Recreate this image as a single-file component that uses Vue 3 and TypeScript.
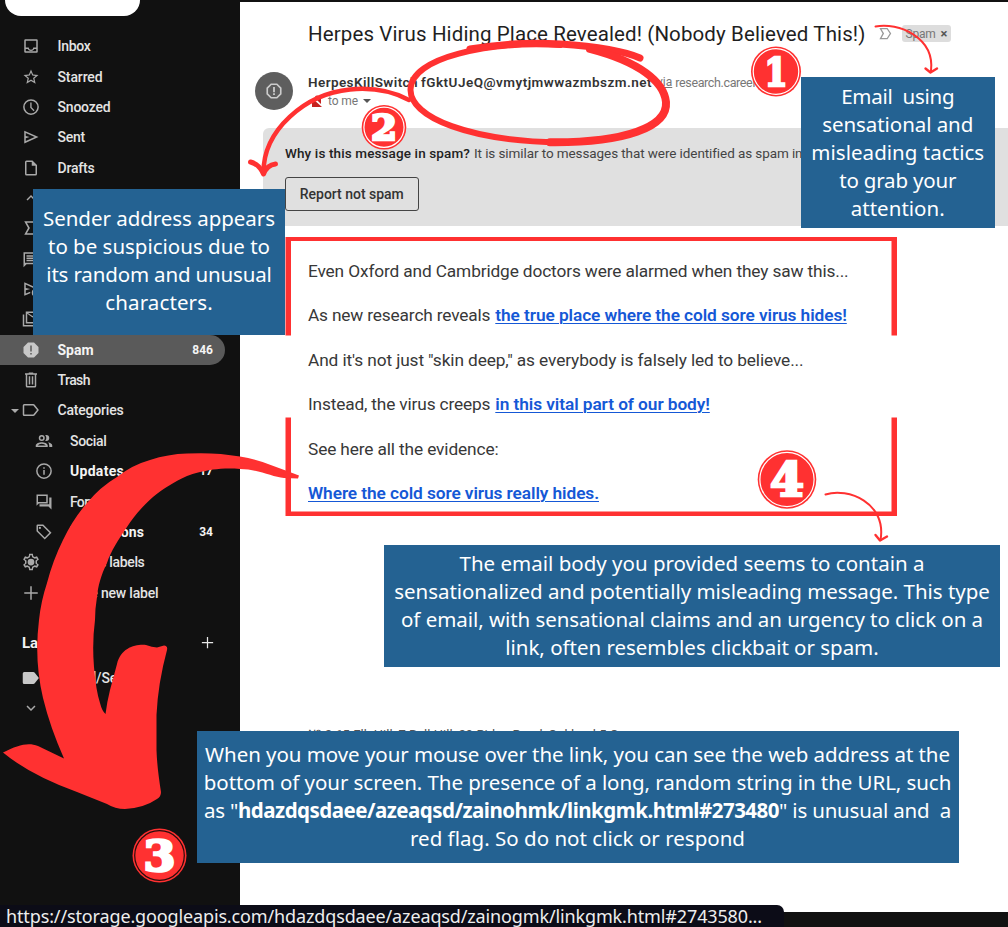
<script setup lang="ts">
interface NavItem {
  label: string
  icon: string
  width: number
  count?: string
  bold?: boolean
  sub?: boolean
  active?: boolean
  caret?: boolean
}

interface Line {
  text: string
  width: number
  link?: string
  linkWidth?: number
}

const icons: Record<string, string> = {
  inbox: 'M4.5 3h15A1.5 1.5 0 0 1 21 4.500v15a1.500 1.500 0 0 1-1.500 1.500h-15A1.500 1.500 0 0 1 3 19.500v-15A1.500 1.500 0 0 1 4.500 3zM5 5v9h4a3 3 0 0 0 6 0h4V5zM5 16v3h14v-3h-2.600a5 5 0 0 1-8.800 0z',
  star: 'M22 9.240l-7.190-.620L12 2 9.190 8.630 2 9.240l5.460 4.730L5.820 21 12 17.270 18.180 21l-1.630-7.030zM12 15.400l-3.760 2.270 1-4.280-3.320-2.880 4.380-.380L12 6.100l1.710 4.040 4.380.380-3.320 2.880 1 4.280z',
  clock: 'M12 1.500a10.500 10.500 0 1 0 0 21 10.500 10.500 0 0 0 0-21zm0 19a8.500 8.500 0 1 1 0-17 8.500 8.500 0 0 1 0 17zM12.800 6H11v7l4.500 4.500 1.200-1.300-3.900-3.900z',
  send: 'M3 3.500v17l19-8.500zm2 3.100L17 12 5 17.400V13.500l5-1.500-5-1.500z',
  draft: 'M14 2H6a2 2 0 0 0-2 2v16a2 2 0 0 0 2 2h12a2 2 0 0 0 2-2V8zM6 20V4h7v5h5v11z',
  up: 'M12 8l-6 6 1.400 1.400L12 10.800l4.600 4.600L18 14z',
  down: 'M16.600 8.600L12 13.200 7.400 8.600 6 10l6 6 6-6z',
  important: 'M3 3h13l6 9-6 9H3l5-9zM6.500 5l4 7-4 7h8.500l4.600-7L15 5z',
  chat: 'M22 3H2v20l4-4h16zM4 5h16v12H4zM6 7h12v2H6zm0 3h12v2H6zm0 3h12v2H6z',
  scheduled: 'M3 3v18l8-3.500v-2L5 18v-4.500l6-1.500-6-1.500V6l10 4.500h5zM18 12a5 5 0 1 0 0 10 5 5 0 0 0 0-10z',
  allmail: 'M5 2h18v16H5zm2 3v11h14V5l-7 5zm1-1 6 4 6-4zM1 6h2v14h17v2H1z',
  spam: 'M8 2h8l6 6v8l-6 6H8l-6-6V8zm3 4v8h2V6zm0 10v2h2v-2z',
  trash: 'M15 3V2H9v1H4v2h1v15a2 2 0 0 0 2 2h10a2 2 0 0 0 2-2V5h1V3zm2 17H7V5h10zM9 7h2v11H9zm4 0h2v11h-2z',
  label: 'M3 4h12a2.500 2.500 0 0 1 2 1l5.500 7-5.500 7a2.500 2.500 0 0 1-2 1H3a2 2 0 0 1-2-2V6a2 2 0 0 1 2-2zm0 2v12h12l5-6-5-6z',
  labelSolid: 'M3 4h12a2.500 2.500 0 0 1 2 1l5.500 7-5.500 7a2.500 2.500 0 0 1-2 1H3a2 2 0 0 1-2-2V6a2 2 0 0 1 2-2z',
  people: 'M9 4a4 4 0 1 0 0 8 4 4 0 0 0 0-8zm0 2a2 2 0 1 1 0 4 2 2 0 0 1 0-4zM9 13.500c-3 0-8 1.500-8 4.500v2h16v-2c0-3-5-4.500-8-4.500zM3.500 18c.7-1.300 3.500-2.500 5.500-2.500s4.800 1.200 5.500 2.500zM15 4a4 4 0 0 1 0 8c-.6 0-1-.1-1.400-.3 2-2.500 2-5 0-7.400.4-.2.9-.3 1.400-.3zM17.500 13.700c2.700.6 5.500 2 5.500 4.300v2h-4v-2c0-1.700-.5-3.200-1.500-4.300z',
  info: 'M12 1.500a10.500 10.500 0 1 0 0 21 10.500 10.500 0 0 0 0-21zm0 19a8.500 8.500 0 1 1 0-17 8.500 8.500 0 0 1 0 17zM11 10.500h2V17h-2zM11 7h2v2h-2z',
  forum: 'M2 2h15v12H5l-3 3zm2 2v8h11V4zM19 6h3v16l-4-4H6v-3h13z',
  tag: 'M11 2H3.500A1.500 1.500 0 0 0 2 3.500V11l11 11 9-9zM4 4h6.200l9 9L13 19.200l-9-9zM6.500 5a1.500 1.500 0 1 0 0 3 1.500 1.500 0 0 0 0-3z',
  gear: 'M9.500 1h5l.5 3.200 2 1.200 3-1.200 2.500 4.300L20 10.500v3l2.500 2-2.500 4.300-3-1.200-2 1.200-.5 3.200h-5L9 19.800l-2-1.200-3 1.200-2.500-4.300 2.500-2v-3l-2.500-2L4 4.200l3 1.200 2-1.200zM11 3l-.5 2.700L7 7.700 4.900 6.900l-.9 1.600 2 1.600v3.800l-2 1.600.9 1.600 2.100-.8 3.500 2L11 21h2l.5-2.700 3.500-2 2.100.8.9-1.600-2-1.600v-3.800l2-1.600-.9-1.600-2.100.8-3.500-2L13 3zM12 7.500a4.500 4.500 0 1 1 0 9 4.500 4.500 0 0 1 0-9z',
  plus: 'M11 3h2v8h8v2h-8v8h-2v-8H3v-2h8z',
}

const nav: NavItem[] = [
  { label: 'Inbox', icon: 'inbox', width: 33 },
  { label: 'Starred', icon: 'star', width: 45 },
  { label: 'Snoozed', icon: 'clock', width: 53 },
  { label: 'Sent', icon: 'send', width: 27.5 },
  { label: 'Drafts', icon: 'draft', width: 37 },
  { label: '', icon: 'up', width: 0 },
  { label: '', icon: 'important', width: 0 },
  { label: '', icon: 'chat', width: 0 },
  { label: '', icon: 'scheduled', width: 0 },
  { label: '', icon: 'allmail', width: 0 },
  { label: 'Spam', icon: 'spam', width: 36, count: '846', bold: true, active: true },
  { label: 'Trash', icon: 'trash', width: 32.5 },
  { label: 'Categories', icon: 'label', width: 66, caret: true },
  { label: 'Social', icon: 'people', width: 36.5, sub: true },
  { label: 'Updates', icon: 'info', width: 54, sub: true, bold: true, count: '17' },
  { label: 'Forums', icon: 'forum', width: 43.5, sub: true },
  { label: 'Promotions', icon: 'tag', width: 74, sub: true, bold: true, count: '34' },
  { label: 'Manage labels', icon: 'gear', width: 87 },
  { label: 'Create new label', icon: 'plus', width: 101 },
]

const body: Line[] = [
  { text: 'Even Oxford and Cambridge doctors were alarmed when they saw this...', width: 540.5 },
  { text: 'As new research reveals', width: 182.3, link: 'the true place where the cold sore virus hides!', linkWidth: 351.5 },
  { text: 'And it\'s not just "skin deep," as everybody is falsely led to believe...', width: 495.5 },
  { text: 'Instead, the virus creeps', width: 182.3, link: 'in this vital part of our body!', linkWidth: 214.5 },
  { text: 'See here all the evidence:', width: 190.5 },
  { text: '', width: 0, link: 'Where the cold sore virus really hides.', linkWidth: 291 },
]

const callouts: { name: string; lines: Line[] }[] = [
  {
    name: 'c1',
    lines: [
      { text: 'Email\u00a0 using', width: 113 },
      { text: 'sensational and', width: 151 },
      { text: 'misleading tactics', width: 173 },
      { text: 'to grab your', width: 117 },
      { text: 'attention.', width: 94 },
    ],
  },
  {
    name: 'c2',
    lines: [
      { text: 'Sender address appears', width: 232 },
      { text: 'to be suspicious due to', width: 222 },
      { text: 'its random and unusual', width: 225.5 },
      { text: 'characters.', width: 107.5 },
    ],
  },
  {
    name: 'c4',
    lines: [
      { text: 'The email body you provided seems to contain a', width: 465 },
      { text: 'sensationalized and potentially misleading message. This type', width: 595.5 },
      { text: 'of email, with sensational claims and an urgency to click on a', width: 582 },
      { text: 'link, often resembles clickbait or spam.', width: 373.5 },
    ],
  },
]

const badges = [
  { n: '1', x: 776, y: 71.5, r: 25, size: 39, w: 23, ring: '#ffffff' },
  { n: '2', x: 384, y: 127.3, r: 22.3, size: 35, w: 26, ring: '#ffffff' },
  { n: '3', x: 159.5, y: 855.5, r: 27, size: 42, w: 32, ring: '#2a0c0c' },
  { n: '4', x: 787, y: 479.5, r: 29.3, size: 46, w: 34, ring: '#ffffff' },
]

const vFit = {
  mounted(el: HTMLElement, binding: { value: number }) {
    const n = (el.textContent ?? '').length
    if (!n || !binding.value) return
    const natural = el.getBoundingClientRect().width
    el.style.letterSpacing = `${(binding.value - natural) / n}px`
  },
}
</script>

<template>
  <div class="stage">
    <div class="mail">
      <aside class="sidebar">
        <div class="compose"></div>
        <nav class="nav">
          <div
            v-for="item in nav"
            :key="item.icon"
            class="row"
            :class="{ sub: item.sub, active: item.active, bold: item.bold }"
          >
            <span v-if="item.caret" class="caret"></span>
            <svg class="ico" viewBox="0 0 24 24"><path fill-rule="evenodd" :d="icons[item.icon]" /></svg>
            <span class="name"><span v-if="item.label" v-fit="item.width">{{ item.label }}</span></span>
            <span v-if="item.count" class="count">{{ item.count }}</span>
          </div>
        </nav>
        <div class="labels-head">
          <span>Labels</span>
          <svg class="add" viewBox="0 0 24 24"><path :d="icons.plus" /></svg>
        </div>
        <div class="row">
          <svg class="ico bright" viewBox="0 0 24 24"><path :d="icons.labelSolid" /></svg>
          <span class="name"><span v-fit="72">[Imap]/Sent</span></span>
        </div>
        <div class="row">
          <svg class="ico" viewBox="0 0 24 24"><path :d="icons.down" /></svg>
        </div>
      </aside>

      <main class="message">
        <header class="subject">
          <h1><span v-fit="557.5">Herpes Virus Hiding Place Revealed! (Nobody Believed This!)</span></h1>
          <svg class="marker" viewBox="0 0 24 24"><path fill-rule="evenodd" :d="icons.important" /></svg>
          <span class="chip"><span v-fit="30">Spam</span><b>×</b></span>
        </header>
        <section class="sender">
          <div class="avatar">
            <svg viewBox="0 0 24 24"><path fill="none" stroke="#ccc" stroke-width="2.200" d="M8.200 3h7.600L21 8.200v7.600L15.800 21H8.200L3 15.800V8.200z" /><path fill="#ccc" d="M10.800 6.500h2.400v7h-2.400zm0 8.500h2.400v2.400h-2.400z" /></svg>
          </div>
          <div class="who">
            <div class="from">
              <b v-fit="110">HerpesKillSwitch</b><b class="addr" v-fit="231">fGktUJeQ@vmytjmwwazmbszm.net</b>
              <u>via</u><span class="via" v-fit="81">research.career</span>
            </div>
            <div class="to">
              <svg class="lock" viewBox="0 0 12 12"><path fill="#c5221f" d="M1 4h1l9 8H1zM4 4V2.500a2 2 0 0 1 4 0V4h2v5L5 4z" /></svg>
              <span v-fit="30">to me</span><i></i>
            </div>
          </div>
        </section>
        <section class="notice">
          <p><b v-fit="185">Why is this message in spam?</b><span v-fit="328">It is similar to messages that were identified as spam in</span></p>
          <button><span v-fit="104">Report not spam</span></button>
        </section>
        <article class="body">
          <p v-for="(l, i) in body" :key="i">
            <span v-if="l.text" class="txt" v-fit="l.width">{{ l.text }}</span>
            <a v-if="l.link" v-fit="l.linkWidth!">{{ l.link }}</a>
          </p>
        </article>
        <footer class="footer"><span v-fit="344">№ 2 65 Elk Hill, 7 Bell Hill, 29 Ridge Road, Oakland 5 Oregon</span></footer>
      </main>
    </div>
    <div class="status"><span v-fit="756">https://storage.googleapis.com/hdazdqsdaee/azeaqsd/zainogmk/linkgmk.html#2743580...</span></div>

    <svg class="ink" viewBox="0 0 1008 927">
      <path class="frame" d="M285.500 335.500V237H897v98.500h-5.500V241H291v94.500zM285.500 417.500H291V511.500H891.500v-94H897V516H285.500z" />
    </svg>

    <div v-for="c in callouts" :key="c.name" class="callout" :class="c.name">
      <div v-for="(l, i) in c.lines" :key="i"><span v-fit="l.width">{{ l.text }}</span></div>
    </div>

    <svg class="ink" viewBox="0 0 1008 927">
      <g class="brush">
        <path stroke-width="7" d="M640 58C622 50 590 46 560 44S500 44 470 49" />
        <path stroke-width="6" d="M560 45C490 41 410 57 410.500 90C411 118 470 141 560 142.500" />
        <path stroke-width="8" d="M550 142.300C625 143 668 127 666 102C664 82 640 62 590 49" />
      </g>
      <g class="brush">
        <path stroke-width="4.500" d="M409 100C390 90 370 87.500 350 89.500C305 94 263 130 263.500 173" />
        <path stroke-width="5" d="M250.500 162Q259 164 263.500 174Q267 165 275.500 164" />
      </g>
      <g class="brush">
        <path stroke-width="2" d="M875.500 26.500C898 22 935 37 931 71" />
        <path stroke-width="2.400" d="M925.500 68.500L930.500 72.500L937 68.500" />
      </g>
      <g class="brush">
        <path stroke-width="2" d="M825.500 494.500C848 487 887 503 880.500 540" />
        <path stroke-width="2.400" d="M875.500 535L880 540.500L887 536.500" />
      </g>
      <path
        class="big"
        d="M299 475.500L298 478.500L284 478C272 477 258 469 240 469C228 468 220 469 213 469.500C200 472 195 473 187 476C174 482 164 488 153 497C142 507 134 516 127 527C118 540 111 551 107 563C101 575 98 586 97 597Q95 609 95 620Q92 643 94 667Q96 691 100 703Q102 711 105.500 714Q107 702 110 690L117 664C121 648 135 644 146 645Q152 647 157 647.500L164 645.500Q168 646 167 650Q158 683 156.500 715V750Q157 767 161 792Q161 797 157 799Q144 808 125 809Q115 809 107 804L77 792Q30 775 3 752.500C18 745 28 742 38 746L64 758.500Q50 727 43 698Q34 660 39 620Q41 601 47 583Q53 560 63 540Q73 519 87 503Q100 487 117 477Q132 465 150 460Q168 454 187 453.500Q215 452 240 456.500Q255 459 268 464L287 471Z"
      />
      <g v-for="b in badges" :key="b.n">
        <circle :cx="b.x" :cy="b.y" :r="b.r" fill="#ff3131" />
        <circle :cx="b.x" :cy="b.y" :r="b.r - 2.200" fill="none" :stroke="b.ring" stroke-width="1.200" />
        <text
          class="digit"
          :x="b.x"
          :y="b.y + b.size * 0.360"
          :font-size="b.size"
          :textLength="b.w"
          lengthAdjust="spacingAndGlyphs"
          text-anchor="middle"
        >{{ b.n }}</text>
      </g>
    </svg>

    <div class="callout c3">
      <div><span v-fit="745">When you move your mouse over the link, you can see the web address at the</span></div>
      <div><span v-fit="747.5">bottom of your screen. The presence of a long, random string in the URL, such</span></div>
      <div><span v-fit="34">as&nbsp;"</span><b v-fit="541">hdazdqsdaee/azeaqsd/zainohmk/linkgmk.html#273480</b><span v-fit="172">" is unusual and&nbsp; a</span></div>
      <div><span v-fit="335">red flag. So do not click or respond</span></div>
    </div>
  </div>
</template>

<style>
body { margin: 0; background: #111; }
</style>

<style scoped>
.stage {
  position: relative;
  width: 1008px;
  height: 927px;
  overflow: hidden;
  background: #111;
  font-family: Roboto, "Liberation Sans", sans-serif;
}
.stage span, .stage b, .stage a { white-space: pre; }
.mail { display: grid; grid-template-columns: 239.500px 1fr; height: 912px; }

.sidebar { color: #e4e4e4; font-size: 14px; font-weight: 500; }
.compose { width: 135px; height: 16px; margin-left: 5px; background: #fff; border-radius: 0 0 16px 16px; }
.nav { padding-top: 15.200px; }
.row {
  display: flex;
  align-items: center;
  box-sizing: border-box;
  position: relative;
  width: 225px;
  height: 30.350px;
  padding: 0 12px 0 22px;
  border-radius: 0 16px 16px 0;
}
.row.sub { padding-left: 34.500px; }
.row.active { background: #5a5a5a; }
.row.bold { font-weight: 700; color: #f4f4f4; }
.ico { width: 18px; height: 18px; fill: #a9a9a9; flex: none; }
.active .ico, .ico.bright { fill: #c8c8c8; }
.name { flex: 1; padding-left: 17.500px; }
.count { font-size: 12px; letter-spacing: 0; }
.caret { position: absolute; left: 11px; top: 13.500px; border: 4px solid transparent; border-top-color: #aaa; border-bottom: 0; }
.labels-head {
  display: flex;
  justify-content: space-between;
  align-items: center;
  width: 193px;
  height: 40px;
  margin: 15.200px 0 0 22px;
  font-size: 15px;
  font-weight: 700;
  color: #f2f2f2;
}
.add { width: 15px; height: 15px; fill: #e8e8e8; }

.message {
  height: 910.500px;
  margin-top: 1.500px;
  background: #fff;
  overflow: hidden;
  color: #222;
}
.subject { display: flex; align-items: center; height: 32px; padding: 16px 0 0 68.500px; }
.subject h1 { margin: 0; width: 567.500px; font-size: 20.500px; font-weight: 400; color: #1f1f1f; }
.marker { width: 18px; height: 15px; fill: #999; }
.chip {
  display: flex;
  align-items: center;
  gap: 5px;
  height: 16.500px;
  margin-left: 8px;
  padding: 0 4px;
  border-radius: 3px;
  background: #ddd;
  color: #777;
  font-size: 12px;
}
.chip b { font-size: 13px; color: #555; }
.sender { display: flex; height: 55.500px; padding: 22.500px 0 0 15px; }
.avatar { display: grid; place-items: center; width: 38px; height: 38px; border-radius: 50%; background: #5e5e5e; }
.avatar svg { width: 18px; height: 18px; }
.who { padding-left: 15.500px; }
.from { display: flex; align-items: center; height: 20px; font-size: 13.500px; font-weight: 500; color: #333; }
.from b { font-weight: 600; }
.addr { margin-left: 3px; }
.from u { margin: 0 3px 0 5px; font-size: 12px; font-weight: 400; color: #777; }
.via { font-size: 12.500px; font-weight: 400; color: #777; }
.to { display: flex; align-items: center; height: 18px; font-size: 12px; color: #777; }
.lock { width: 12px; height: 12px; margin: 0 5px 0 3px; }
.to i { margin-left: 5px; border: 4px solid transparent; border-top-color: #555; border-bottom: 0; }
.notice { height: 98.500px; margin-left: 23px; padding-left: 22.500px; border-radius: 6px 0 0 0; background: #e0e0e0; overflow: hidden; }
.notice p { display: flex; gap: 4px; margin: 15.500px 0 14px; height: 20px; line-height: 20px; font-size: 13.500px; color: #444; }
.notice b { font-weight: 500; color: #222; }
.notice button {
  display: block;
  width: 133.500px;
  height: 33.500px;
  padding: 0;
  border: 1px solid #444;
  border-radius: 3px;
  background: transparent;
  font: 500 14px/30px Roboto, sans-serif;
  color: #333;
}
.body { padding: 23px 0 0 68.500px; }
.body p { display: flex; gap: 5px; height: 44.400px; margin: 0; font-size: 17.300px; line-height: 44.400px; color: #383838; }
.body a { color: #1558d6; font-weight: 600; text-decoration: underline; text-decoration-thickness: 1px; text-underline-offset: 2px; }
.footer { padding: 210px 0 0 68.500px; font-size: 13px; line-height: 20px; color: #555; }
.status {
  position: absolute;
  left: 0;
  bottom: 0;
  width: 778px;
  height: 22px;
  padding-left: 6px;
  border-radius: 0 7px 0 0;
  background: #0c0c17;
  color: #eee;
  font: 18px/23px "Noto Sans", "Open Sans", sans-serif;
}

.ink { position: absolute; inset: 0; width: 1008px; height: 927px; }
.frame, .big { fill: #ff3131; }
.brush { fill: none; stroke: #ff3131; stroke-linecap: round; stroke-linejoin: round; }
.digit { font-family: "DejaVu Serif", serif; font-weight: 700; fill: #fff; stroke: #fff; stroke-width: 2.600px; }

.callout {
  position: absolute;
  box-sizing: border-box;
  background: #246292;
  color: #fff;
  text-align: center;
  font: 20.500px/28px "Noto Sans", "Open Sans", sans-serif;
}
.c1 { left: 801px; top: 77px; width: 193.500px; height: 151px; padding-top: 5px; }
.c2 { left: 33px; top: 188.500px; width: 252px; height: 146.500px; padding-top: 15.500px; }
.c4 { left: 384px; top: 544.500px; width: 616px; height: 122.500px; padding-top: 4.500px; }
.c3 { left: 196.500px; top: 731px; width: 762px; height: 132px; padding-top: 9px; }
</style>
